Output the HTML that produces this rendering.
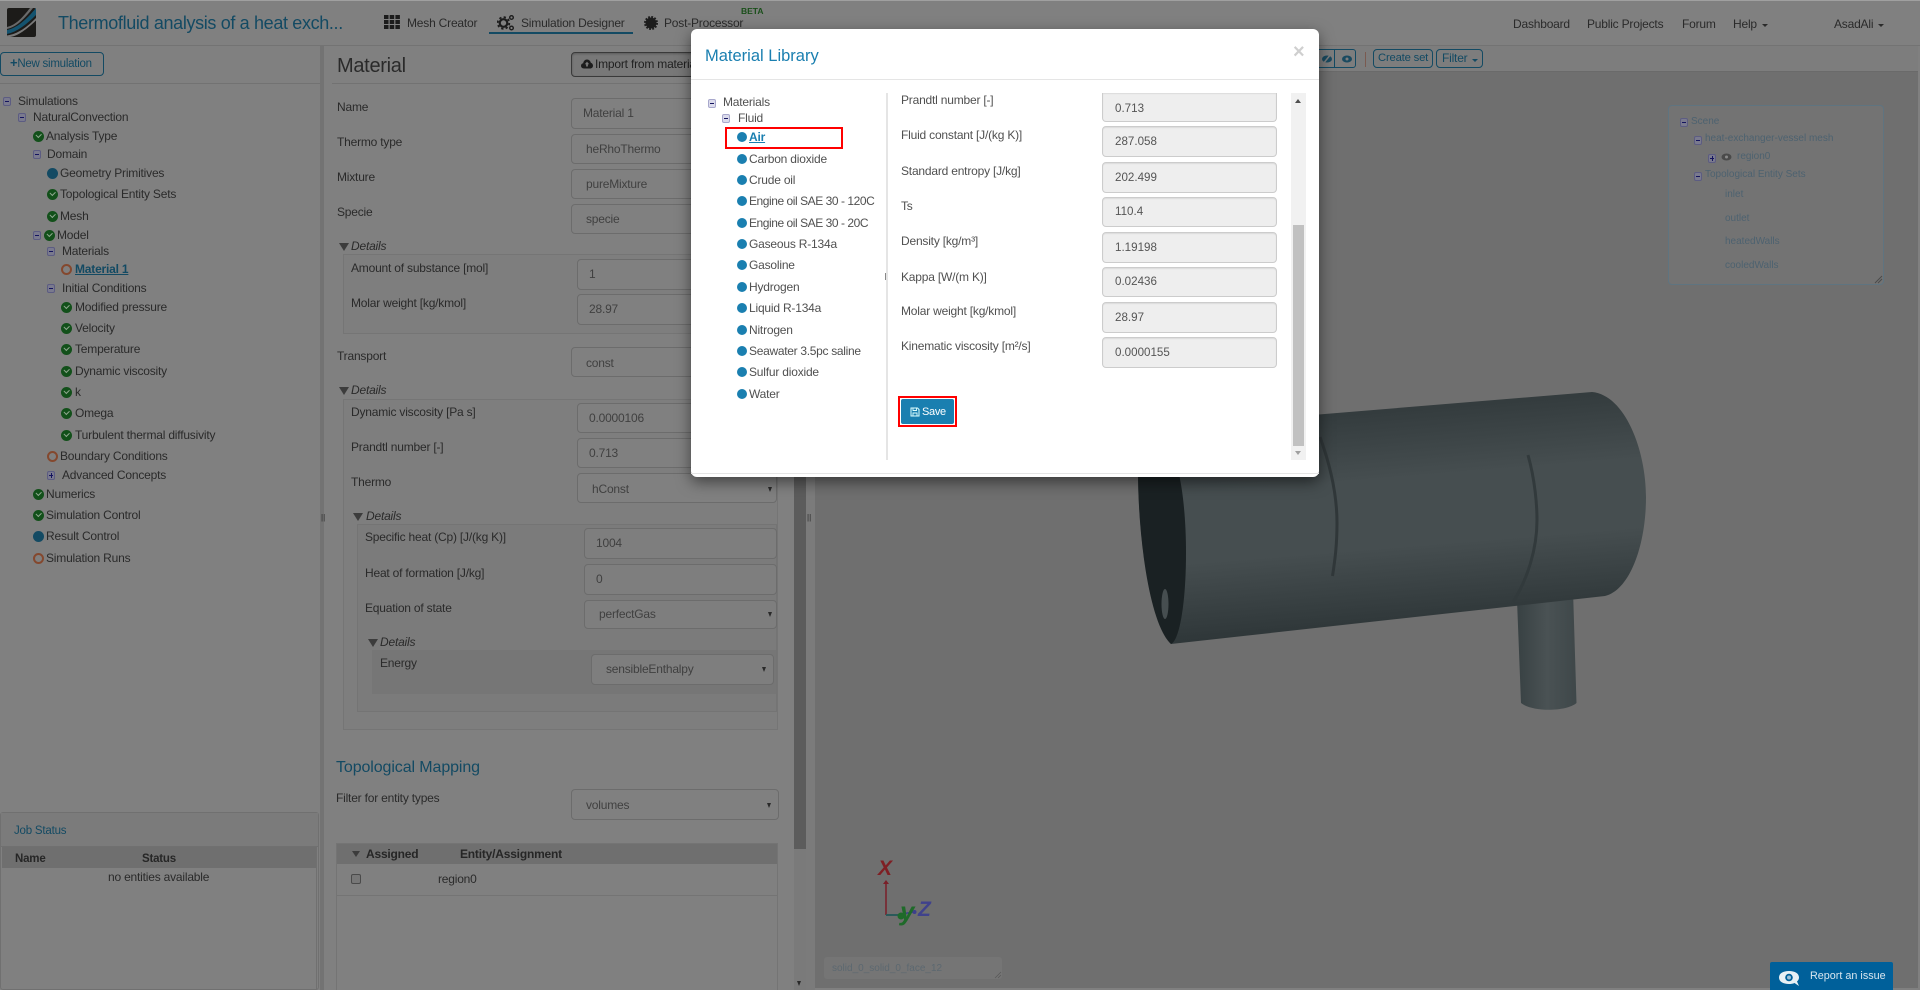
<!DOCTYPE html>
<html lang="en">
<head>
<meta charset="utf-8">
<title>Material Library</title>
<style>
html,body{margin:0;padding:0;width:1920px;height:990px;overflow:hidden;background:#808080}
body{position:relative;font-family:"Liberation Sans",Arial,sans-serif;font-size:12px;letter-spacing:-.2px;color:#2a2a2a}
.a,.t,.i,.ck,.dot,.ring,.mn,.pl,svg.p{position:absolute}
.t{white-space:nowrap;line-height:16px;margin-top:-8px}
.i{box-sizing:border-box;border:1px solid #6c6c6c;border-radius:4px;background:#808080;color:#404040;white-space:nowrap;overflow:hidden}
.ck{width:11px;height:11px;border-radius:50%;background:#12501a;margin-top:-5px}
.ck:after{content:"";position:absolute;left:3px;top:2px;width:4px;height:2.5px;border-left:1.6px solid #8fa88f;border-bottom:1.6px solid #8fa88f;transform:rotate(-45deg)}
.dot{width:11px;height:11px;border-radius:50%;background:#134a63;margin-top:-5px}
.ring{box-sizing:border-box;width:11px;height:11px;border-radius:50%;border:2px solid #84482e;margin-top:-5px}
.mn,.pl{box-sizing:border-box;width:8px;height:9px;border:1px solid #5c5c82;border-radius:2px;background:#7a7a8e;margin-top:-4px}
.mn:after,.pl:after{content:"";position:absolute;left:1px;top:3px;width:4px;height:1px;background:#14145e}
.pl:before{content:"";position:absolute;left:2.5px;top:1px;width:1px;height:5px;background:#14145e}
.tri{position:absolute;width:0;height:0;border-left:5px solid transparent;border-right:5px solid transparent;border-top:8px solid #3c3c3c;margin-top:-4px}
.ar{position:absolute;width:0;height:0;border-left:2.5px solid transparent;border-right:2.5px solid transparent;border-top:5px solid #2a2a2a}
.sc{color:#4d6270;font-size:10px;letter-spacing:0}
.mt{color:#505050}
.ml{color:#505050}
.mi{position:absolute;box-sizing:border-box;left:1102px;width:175px;border:1px solid #ccc;border-radius:4px;background:#eee;color:#555;font-size:11.6px;letter-spacing:0;padding-left:12px;box-shadow:inset 0 1px 1px rgba(0,0,0,.08)}
.mdot{position:absolute;left:737px;width:10px;height:10px;border-radius:50%;background:#1a7fb0;margin-top:-5px}
</style>
</head>
<body>

<!-- top bar -->
<div class="a" style="left:0;top:0;width:1920px;height:1px;background:#a0a0a0"></div>
<div class="a" style="left:0;top:45px;width:1920px;height:1px;background:#737373"></div>
<svg class="p" style="left:7px;top:8px" width="29" height="29" viewBox="0 0 29 29">
<rect width="29" height="29" rx="2" fill="#1c1b19"/>
<path d="M0 22C10 20 19 12 29 0V7C20 16 10 24 0 26Z" fill="#14536f"/>
<path d="M0 19C9 17 16 9 23 0H26C18 10 10 19 0 21Z" fill="#6a6a6a"/>
<path d="M0 27.500C11 26 20 19 29 10V12.500C20 21 11 28 3 29H0Z" fill="#7a7a7a"/>
</svg>
<div class="t" style="left:58px;top:23px;font-size:18px;letter-spacing:-.35px;color:#134a63;line-height:22px;margin-top:-11px">Thermofluid analysis of a heat exch...</div>
<svg class="p" style="left:384px;top:15px" width="16" height="14" viewBox="0 0 16 14" fill="#1c1c1c">
<rect x="0" y="0" width="4.500" height="4"/><rect x="5.700" y="0" width="4.500" height="4"/><rect x="11.400" y="0" width="4.500" height="4"/>
<rect x="0" y="5" width="4.500" height="4"/><rect x="5.700" y="5" width="4.500" height="4"/><rect x="11.400" y="5" width="4.500" height="4"/>
<rect x="0" y="10" width="4.500" height="4"/><rect x="5.700" y="10" width="4.500" height="4"/><rect x="11.400" y="10" width="4.500" height="4"/>
</svg>
<div class="t" style="left:407px;top:23px">Mesh Creator</div>
<svg class="p" style="left:497px;top:14px" width="18" height="17" viewBox="0 0 18 17">
<circle cx="6.500" cy="9" r="3.800" fill="none" stroke="#1c1c1c" stroke-width="2.200"/>
<circle cx="6.500" cy="9" r="5.800" fill="none" stroke="#1c1c1c" stroke-width="1.800" stroke-dasharray="2.300 2.250"/>
<circle cx="14.500" cy="3.500" r="1.800" fill="none" stroke="#1c1c1c" stroke-width="1.400"/>
<circle cx="14.500" cy="14" r="1.800" fill="none" stroke="#1c1c1c" stroke-width="1.400"/>
</svg>
<div class="t" style="left:521px;top:23px">Simulation Designer</div>
<div class="a" style="left:489px;top:32px;width:144px;height:2px;background:#134a63"></div>
<svg class="p" style="left:644px;top:16px" width="14" height="14" viewBox="0 0 14 14">
<circle cx="7" cy="7" r="5.500" fill="#1c1c1c"/>
<circle cx="7" cy="7" r="6" fill="none" stroke="#1c1c1c" stroke-width="2" stroke-dasharray="1.800 1.350"/>
</svg>
<div class="t" style="left:664px;top:23px">Post-Processor</div>
<div class="t" style="left:741px;top:11px;font-size:8.500px;font-weight:bold;color:#1a4f1a;letter-spacing:0">BETA</div>

<div class="t" style="left:1513px;top:24px">Dashboard</div>
<div class="t" style="left:1587px;top:24px">Public Projects</div>
<div class="t" style="left:1682px;top:24px">Forum</div>
<div class="t" style="left:1733px;top:24px">Help</div>
<div class="ar" style="left:1762px;top:24px;border-left-width:3px;border-right-width:3px;border-top-width:3px"></div>
<div class="t" style="left:1834px;top:24px">AsadAli</div>
<div class="ar" style="left:1878px;top:24px;border-left-width:3px;border-right-width:3px;border-top-width:3px"></div>

<!-- left panel -->
<div class="i" style="left:0;top:52px;width:104px;height:24px;border-color:#134a63;line-height:22px;color:#134a63;padding-left:9px;background:transparent;font-size:11.500px;letter-spacing:-.25px"><b style="font-size:13px;line-height:13px">+</b>New simulation</div>
<div class="a" style="left:0;top:83px;width:320px;height:1px;background:#727272"></div>
<div class="a" style="left:320px;top:46px;width:4px;height:944px;background:#737373"></div>
<div class="t" style="left:321px;top:518px;font-size:8px;letter-spacing:0">||</div>

<div class="mn" style="left:3px;top:101px"></div><div class="t" style="left:18px;top:101px">Simulations</div>
<div class="mn" style="left:18px;top:117px"></div><div class="t" style="left:33px;top:117px">NaturalConvection</div>
<div class="ck" style="left:33px;top:136px"></div><div class="t" style="left:46px;top:136px">Analysis Type</div>
<div class="mn" style="left:33px;top:154px"></div><div class="t" style="left:47px;top:154px">Domain</div>
<div class="dot" style="left:47px;top:173px"></div><div class="t" style="left:60px;top:173px">Geometry Primitives</div>
<div class="ck" style="left:47px;top:194px"></div><div class="t" style="left:60px;top:194px">Topological Entity Sets</div>
<div class="ck" style="left:47px;top:216px"></div><div class="t" style="left:60px;top:216px">Mesh</div>
<div class="mn" style="left:33px;top:235px"></div><div class="ck" style="left:44px;top:235px"></div><div class="t" style="left:57px;top:235px">Model</div>
<div class="mn" style="left:47px;top:251px"></div><div class="t" style="left:62px;top:251px">Materials</div>
<div class="ring" style="left:61px;top:269px"></div><div class="t" style="left:75px;top:269px;color:#134a63;font-weight:bold;text-decoration:underline">Material 1</div>
<div class="mn" style="left:47px;top:288px"></div><div class="t" style="left:62px;top:288px">Initial Conditions</div>
<div class="ck" style="left:61px;top:307px"></div><div class="t" style="left:75px;top:307px">Modified pressure</div>
<div class="ck" style="left:61px;top:328px"></div><div class="t" style="left:75px;top:328px">Velocity</div>
<div class="ck" style="left:61px;top:349px"></div><div class="t" style="left:75px;top:349px">Temperature</div>
<div class="ck" style="left:61px;top:371px"></div><div class="t" style="left:75px;top:371px">Dynamic viscosity</div>
<div class="ck" style="left:61px;top:392px"></div><div class="t" style="left:75px;top:392px">k</div>
<div class="ck" style="left:61px;top:413px"></div><div class="t" style="left:75px;top:413px">Omega</div>
<div class="ck" style="left:61px;top:435px"></div><div class="t" style="left:75px;top:435px">Turbulent thermal diffusivity</div>
<div class="ring" style="left:47px;top:456px"></div><div class="t" style="left:60px;top:456px">Boundary Conditions</div>
<div class="pl" style="left:47px;top:475px"></div><div class="t" style="left:62px;top:475px">Advanced Concepts</div>
<div class="ck" style="left:33px;top:494px"></div><div class="t" style="left:46px;top:494px">Numerics</div>
<div class="ck" style="left:33px;top:515px"></div><div class="t" style="left:46px;top:515px">Simulation Control</div>
<div class="dot" style="left:33px;top:536px"></div><div class="t" style="left:46px;top:536px">Result Control</div>
<div class="ring" style="left:33px;top:558px"></div><div class="t" style="left:46px;top:558px">Simulation Runs</div>

<!-- job status -->
<div class="a" style="left:0;top:812px;width:319px;height:178px;box-sizing:border-box;border:1px solid #707070;border-radius:3px;background:#808080"></div>
<div class="a" style="left:1px;top:813px;width:317px;height:33px;background:#7b7b7b;border-bottom:1px solid #707070"></div>
<div class="t" style="left:14px;top:831px;color:#134a63;font-size:11.500px">Job Status</div>
<div class="a" style="left:2px;top:847px;width:314px;height:21px;background:#6f6f6f"></div>
<div class="a" style="left:316px;top:847px;width:1px;height:143px;background:#707070"></div>
<div class="t" style="left:15px;top:859px;font-weight:bold;color:#262626;font-size:11.500px">Name</div>
<div class="t" style="left:142px;top:859px;font-weight:bold;color:#262626;font-size:11.500px">Status</div>
<div class="t" style="left:108px;top:877px">no entities available</div>

<!-- middle panel -->
<div class="a" style="left:332px;top:83px;width:462px;height:1px;background:#727272"></div>
<div class="t" style="left:337px;top:66px;font-size:20px;letter-spacing:-.3px;line-height:24px;margin-top:-12px">Material</div>
<div class="i" style="left:571px;top:52px;width:200px;height:25px;border:1px solid #3a3a3a;background:#787878;line-height:23px;padding-left:23px;color:#202020;box-shadow:inset 0 1px 2px rgba(0,0,0,.25)">Import from material library</div>
<svg class="p" style="left:581px;top:59px" width="12" height="10" viewBox="0 0 12 10"><path d="M3 9.500C1 9.500 0 8.200 0 6.800C0 5.400 1 4.500 2.200 4.300C2.400 2.200 4 .5 6 .5C8 .5 9.500 2 9.800 3.800C11 4.100 12 5.200 12 6.600C12 8.300 10.800 9.500 9 9.500Z" fill="#1c1c1c"/><path d="M6 2.800L8.200 5.200H6.900V7.500H5.100V5.200H3.800Z" fill="#787878"/></svg>

<div class="t" style="left:337px;top:107px">Name</div><div class="i" style="left:571px;top:98px;width:209px;height:31px;line-height:29px;padding-left:11px">Material 1</div>
<div class="t" style="left:337px;top:142px">Thermo type</div><div class="i" style="left:571px;top:134px;width:209px;height:30px;line-height:28px;padding-left:14px">heRhoThermo</div>
<div class="t" style="left:337px;top:177px">Mixture</div><div class="i" style="left:571px;top:169px;width:209px;height:30px;line-height:28px;padding-left:14px">pureMixture</div>
<div class="t" style="left:337px;top:212px">Specie</div><div class="i" style="left:571px;top:204px;width:209px;height:30px;line-height:28px;padding-left:14px">specie</div>

<div class="tri" style="left:339px;top:247px"></div><div class="t" style="left:351px;top:246px;font-style:italic">Details</div>
<div class="a" style="left:343px;top:254px;width:437px;height:80px;box-sizing:border-box;border:1px solid #757575;background:#7e7e7e"></div>
<div class="t" style="left:351px;top:268px">Amount of substance [mol]</div><div class="i" style="left:577px;top:259px;width:200px;height:31px;line-height:29px;padding-left:11px">1</div>
<div class="t" style="left:351px;top:303px">Molar weight [kg/kmol]</div><div class="i" style="left:577px;top:294px;width:200px;height:31px;line-height:29px;padding-left:11px">28.97</div>

<div class="t" style="left:337px;top:356px">Transport</div><div class="i" style="left:571px;top:347px;width:209px;height:30px;line-height:30px;padding-left:14px">const</div>
<div class="tri" style="left:339px;top:391px"></div><div class="t" style="left:351px;top:390px;font-style:italic">Details</div>
<div class="a" style="left:343px;top:399px;width:435px;height:331px;box-sizing:border-box;border:1px solid #757575;background:#7e7e7e"></div>
<div class="t" style="left:351px;top:412px">Dynamic viscosity [Pa s]</div><div class="i" style="left:577px;top:403px;width:200px;height:30px;line-height:28px;padding-left:11px">0.0000106</div>
<div class="t" style="left:351px;top:447px">Prandtl number [-]</div><div class="i" style="left:577px;top:438px;width:200px;height:30px;line-height:28px;padding-left:11px">0.713</div>
<div class="t" style="left:351px;top:482px">Thermo</div><div class="i" style="left:577px;top:473px;width:200px;height:30px;line-height:30px;padding-left:14px">hConst</div>
<div class="ar" style="left:768px;top:487px"></div>

<div class="tri" style="left:353px;top:517px"></div><div class="t" style="left:366px;top:516px;font-style:italic">Details</div>
<div class="a" style="left:357px;top:524px;width:420px;height:188px;box-sizing:border-box;border:1px solid #747474;background:#7b7b7b"></div>
<div class="t" style="left:365px;top:537px">Specific heat (Cp) [J/(kg K)]</div><div class="i" style="left:584px;top:528px;width:193px;height:31px;line-height:29px;padding-left:11px;background:#7e7e7e">1004</div>
<div class="t" style="left:365px;top:573px">Heat of formation [J/kg]</div><div class="i" style="left:584px;top:564px;width:193px;height:31px;line-height:29px;padding-left:11px;background:#7e7e7e">0</div>
<div class="t" style="left:365px;top:608px">Equation of state</div><div class="i" style="left:584px;top:600px;width:193px;height:29px;line-height:27px;padding-left:14px;background:#7e7e7e">perfectGas</div>
<div class="ar" style="left:768px;top:612px"></div>

<div class="tri" style="left:368px;top:643px"></div><div class="t" style="left:380px;top:642px;font-style:italic">Details</div>
<div class="a" style="left:372px;top:650px;width:404px;height:44px;background:#767676"></div>
<div class="t" style="left:380px;top:663px">Energy</div><div class="i" style="left:591px;top:654px;width:183px;height:31px;line-height:29px;padding-left:14px;background:#7e7e7e">sensibleEnthalpy</div>
<div class="ar" style="left:762px;top:667px"></div>

<div class="t" style="left:336px;top:768px;font-size:16px;letter-spacing:-.1px;color:#134a63;line-height:20px;margin-top:-10px">Topological Mapping</div>
<div class="t" style="left:336px;top:798px">Filter for entity types</div>
<div class="i" style="left:571px;top:789px;width:208px;height:31px;line-height:31px;padding-left:14px">volumes</div>
<div class="ar" style="left:767px;top:803px"></div>

<div class="a" style="left:336px;top:843px;width:442px;height:147px;box-sizing:border-box;border:1px solid #747474;border-bottom:0"></div>
<div class="a" style="left:337px;top:844px;width:440px;height:20px;background:#6f6f6f"></div>
<div class="a" style="left:352px;top:851px;width:0;height:0;border-left:4px solid transparent;border-right:4px solid transparent;border-top:6px solid #3c3c3c"></div>
<div class="t" style="left:366px;top:854px;font-weight:bold;color:#262626">Assigned</div>
<div class="t" style="left:460px;top:854px;font-weight:bold;color:#262626">Entity/Assignment</div>
<div class="a" style="left:351px;top:874px;width:10px;height:10px;box-sizing:border-box;border:1px solid #4a4a4a;border-radius:2px;background:#777"></div>
<div class="t" style="left:438px;top:879px">region0</div>
<div class="a" style="left:337px;top:895px;width:440px;height:1px;background:#747474"></div>

<div class="a" style="left:794px;top:46px;width:12px;height:944px;background:#7a7a7a"></div>
<div class="a" style="left:794px;top:46px;width:12px;height:803px;background:#5c5c5c"></div>
<div class="ar" style="left:797px;top:981px"></div>
<div class="a" style="left:806px;top:46px;width:9px;height:944px;background:#7b7b7b"></div>
<div class="t" style="left:807px;top:518px;font-size:8px;letter-spacing:0">||</div>

<!-- viewer -->
<div class="a" style="left:815px;top:46px;width:1103px;height:26px;background:#7d7d7d;border-bottom:1px solid #6a6a6a;box-sizing:border-box"></div>
<div class="a" style="left:815px;top:72px;width:1103px;height:916px;background:#6f6f6f"></div>
<div class="a" style="left:1300px;top:49px;width:56px;height:19px;box-sizing:border-box;border:1px solid #134a63;border-radius:3px"></div>
<div class="a" style="left:1334px;top:49px;width:1px;height:19px;background:#134a63"></div>
<svg class="p" style="left:1320px;top:53px" width="34" height="12" viewBox="0 0 34 12">
<ellipse cx="7" cy="6" rx="5" ry="3.500" fill="#1a4a60"/><path d="M3 11L11 1" stroke="#7d7d7d" stroke-width="1.500"/>
<ellipse cx="27" cy="6" rx="5" ry="3.500" fill="#1a4a60"/><circle cx="27" cy="6" r="1.500" fill="#7d7d7d"/>
</svg>
<div class="a" style="left:1365px;top:52px;width:1px;height:15px;background:#7a5a50"></div>
<div class="i" style="left:1373px;top:49px;width:60px;height:19px;border-color:#134a63;background:transparent;color:#134a63;line-height:17px;padding-left:4px;font-size:11.300px">Create set</div>
<div class="i" style="left:1436px;top:49px;width:47px;height:19px;border-color:#134a63;background:transparent;color:#134a63;line-height:17px;padding-left:5px">Filter</div>
<div class="ar" style="left:1472px;top:59px;border-top-color:#134a63;border-left-width:3px;border-right-width:3px;border-top-width:3px"></div>

<!-- 3D model -->
<svg class="p" style="left:0;top:0" width="1920" height="990" viewBox="0 0 1920 990">
<defs>
<linearGradient id="b" gradientUnits="userSpaceOnUse" x1="1390" y1="392" x2="1410" y2="640">
<stop offset="0" stop-color="#2f3739"/><stop offset=".35" stop-color="#464e50"/><stop offset=".62" stop-color="#464e50"/><stop offset="1" stop-color="#2a3234"/>
</linearGradient>
<linearGradient id="c" gradientUnits="userSpaceOnUse" x1="1517" y1="0" x2="1577" y2="0">
<stop offset="0" stop-color="#384143"/><stop offset=".5" stop-color="#4a5254"/><stop offset="1" stop-color="#3e4749"/>
</linearGradient>
</defs>
<path d="M1517 600L1521 703C1532 712 1566 712 1576.500 703L1573 590Z" fill="url(#c)"/>
<path d="M1130 430L1592 392C1625 395 1646 450 1646 497C1646 545 1630 590 1605 596L1171 644C1150 620 1138 540 1138 470Z" fill="url(#b)"/>
<path d="M1138 470C1138 540 1150 625 1171 644C1180 640 1186 600 1186 553C1186 520 1183 490 1178 470Z" fill="#1a2123"/>
<ellipse cx="1165" cy="604" rx="3.500" ry="15" fill="#464e50"/>
<path d="M1320 437C1332 470 1337 500 1337 523C1337 545 1335 560 1332.500 576" fill="none" stroke="#303739" stroke-width="3"/>
<path d="M1528 455C1535 480 1537 505 1537 520C1537 550 1527 580 1513 602" fill="none" stroke="#323a3c" stroke-width="3"/>
<path d="M886 915V884" stroke="#7a1f28" stroke-width="1.500"/>
<path d="M883 884L886 880L889 884Z" fill="#7a1f28"/>
<path d="M886 915H901" stroke="#2a5a5a" stroke-width="2"/>
<path d="M901 914L914 912" stroke="#3d3f8c" stroke-width="1.500"/>
<circle cx="914.500" cy="912" r="2" fill="#3d3f8c"/>
<circle cx="901" cy="916" r="3.500" fill="#1f6a2a"/>
<text x="878" y="875" font-family="Liberation Sans" font-size="21" font-weight="bold" font-style="italic" fill="#7f1f24" letter-spacing="0">X</text>
<text x="900" y="920" font-family="Liberation Sans" font-size="26" font-weight="bold" font-style="italic" fill="#1f6a2a" letter-spacing="0">y</text>
<text x="918" y="916" font-family="Liberation Sans" font-size="21" font-weight="bold" font-style="italic" fill="#40428c" letter-spacing="0">Z</text>
</svg>

<div class="a" style="left:824px;top:957px;width:178px;height:22px;background:#757575;border-radius:3px"></div>
<div class="t sc" style="left:832px;top:969px;font-size:10px;color:#5c6870">solid_0_solid_0_face_12</div>
<svg class="p" style="left:994px;top:971px" width="8" height="8" viewBox="0 0 8 8"><path d="M1 7L7 1M4 7L7 4" stroke="#5a5a5a" stroke-width=".8"/></svg>

<!-- scene tree -->
<div class="a" style="left:1668px;top:105px;width:216px;height:180px;box-sizing:border-box;border:1px solid #5f7480;border-radius:4px;background:#737373"></div>
<div class="mn" style="left:1680px;top:122px"></div><div class="t sc" style="left:1691px;top:122px">Scene</div>
<div class="mn" style="left:1694px;top:140px"></div><div class="t sc" style="left:1705px;top:139px">heat-exchanger-vessel mesh</div>
<div class="pl" style="left:1708px;top:158px"></div>
<svg class="p" style="left:1721px;top:153px" width="11" height="8" viewBox="0 0 11 8"><ellipse cx="5.500" cy="4" rx="5" ry="3.500" fill="#4a4a4a"/><circle cx="5.500" cy="4" r="1.500" fill="#8a8a8a"/></svg>
<div class="t sc" style="left:1737px;top:157px">region0</div>
<div class="mn" style="left:1694px;top:176px"></div><div class="t sc" style="left:1705px;top:175px">Topological Entity Sets</div>
<div class="t sc" style="left:1725px;top:195px">inlet</div>
<div class="t sc" style="left:1725px;top:219px">outlet</div>
<div class="t sc" style="left:1725px;top:242px">heatedWalls</div>
<div class="t sc" style="left:1725px;top:266px">cooledWalls</div>
<svg class="p" style="left:1874px;top:275px" width="9" height="9" viewBox="0 0 9 9"><path d="M1 8L8 1M4 8L8 4" stroke="#4a4a4a" stroke-width=".9"/></svg>

<!-- report -->
<div class="a" style="left:1770px;top:962px;width:123px;height:28px;background:#00609a;border-radius:2px 2px 0 0"></div>
<svg class="p" style="left:1779px;top:970px" width="21" height="17" viewBox="0 0 21 17">
<path d="M10 1C4 1 0 3.500 0 7.500S4 14 10 14C12 14 14 13.700 15.500 13L20 16L18 11.500C19.200 10.500 20 9 20 7.500C20 3.500 16 1 10 1Z" fill="#e8f0f5"/>
<circle cx="10" cy="7.500" r="3.800" fill="#00609a"/><circle cx="10" cy="7.500" r="2" fill="#9cc0d8"/>
</svg>
<div class="t" style="left:1810px;top:976px;color:#d8e6ef;font-size:10.800px;letter-spacing:0">Report an issue</div>

<!-- modal -->
<div class="a" style="left:691px;top:29px;width:628px;height:448px;background:#fff;border-radius:6px;box-shadow:0 5px 15px rgba(0,0,0,.5)"></div>
<div class="t" style="left:705px;top:56px;font-size:16.500px;letter-spacing:0;color:#1a7fb0;line-height:20px;margin-top:-10px">Material Library</div>
<div class="t" style="left:1293px;top:52px;font-size:20px;font-weight:bold;letter-spacing:0;color:#cfcfcf;line-height:20px;margin-top:-10px">×</div>
<div class="a" style="left:691px;top:79px;width:628px;height:1px;background:#e5e5e5"></div>

<div class="mn" style="left:708px;top:103px;background:#dcdcec;border-color:#a8a8cc"></div><div class="t mt" style="left:723px;top:102px">Materials</div>
<div class="mn" style="left:722px;top:118px;background:#dcdcec;border-color:#a8a8cc"></div><div class="t mt" style="left:738px;top:118px">Fluid</div>
<div class="a" style="left:725px;top:127px;width:118px;height:22px;box-sizing:border-box;border:2px solid #f00"></div>
<div class="mdot" style="top:137px"></div><div class="t" style="left:749px;top:137px;color:#1a7fb0;font-weight:bold;text-decoration:underline">Air</div>
<div class="mdot" style="top:159px"></div><div class="t mt" style="left:749px;top:159px">Carbon dioxide</div>
<div class="mdot" style="top:180px"></div><div class="t mt" style="left:749px;top:180px">Crude oil</div>
<div class="mdot" style="top:201px"></div><div class="t mt" style="left:749px;top:201px;letter-spacing:-.45px">Engine oil SAE 30 - 120C</div>
<div class="mdot" style="top:223px"></div><div class="t mt" style="left:749px;top:223px;letter-spacing:-.45px">Engine oil SAE 30 - 20C</div>
<div class="mdot" style="top:244px"></div><div class="t mt" style="left:749px;top:244px">Gaseous R-134a</div>
<div class="mdot" style="top:265px"></div><div class="t mt" style="left:749px;top:265px">Gasoline</div>
<div class="mdot" style="top:287px"></div><div class="t mt" style="left:749px;top:287px">Hydrogen</div>
<div class="mdot" style="top:308px"></div><div class="t mt" style="left:749px;top:308px">Liquid R-134a</div>
<div class="mdot" style="top:330px"></div><div class="t mt" style="left:749px;top:330px">Nitrogen</div>
<div class="mdot" style="top:351px"></div><div class="t mt" style="left:749px;top:351px;letter-spacing:-.3px">Seawater 3.5pc saline</div>
<div class="mdot" style="top:372px"></div><div class="t mt" style="left:749px;top:372px">Sulfur dioxide</div>
<div class="mdot" style="top:394px"></div><div class="t mt" style="left:749px;top:394px">Water</div>
<div class="a" style="left:886px;top:93px;width:2px;height:367px;background:#e5e5e5"></div>
<div class="a" style="left:885px;top:273px;width:1px;height:7px;background:#888"></div>

<div class="t ml" style="left:901px;top:100px">Prandtl number [-]</div>
<div class="mi" style="top:93px;height:29px;line-height:27px;border-top:0;padding-top:2px;border-radius:0 0 4px 4px">0.713</div>
<div class="t ml" style="left:901px;top:135px">Fluid constant [J/(kg K)]</div><div class="mi" style="top:126px;height:31px;line-height:29px">287.058</div>
<div class="t ml" style="left:901px;top:171px">Standard entropy [J/kg]</div><div class="mi" style="top:162px;height:31px;line-height:29px">202.499</div>
<div class="t ml" style="left:901px;top:206px">Ts</div><div class="mi" style="top:197px;height:30px;line-height:28px">110.4</div>
<div class="t ml" style="left:901px;top:241px">Density [kg/m³]</div><div class="mi" style="top:232px;height:31px;line-height:29px">1.19198</div>
<div class="t ml" style="left:901px;top:277px">Kappa [W/(m K)]</div><div class="mi" style="top:267px;height:30px;line-height:28px">0.02436</div>
<div class="t ml" style="left:901px;top:311px">Molar weight [kg/kmol]</div><div class="mi" style="top:302px;height:31px;line-height:29px">28.97</div>
<div class="t ml" style="left:901px;top:346px">Kinematic viscosity [m²/s]</div><div class="mi" style="top:337px;height:31px;line-height:29px">0.0000155</div>

<div class="a" style="left:898px;top:396px;width:59px;height:31px;box-sizing:border-box;border:2px solid #f00"></div>
<div class="a" style="left:901px;top:399px;width:53px;height:25px;background:#1a7fb0;border-radius:2px"></div>
<svg class="p" style="left:910px;top:407px" width="10" height="10" viewBox="0 0 10 10"><path d="M1 1H7.500L9 2.500V9H1Z" fill="none" stroke="#dff" stroke-width="1"/><path d="M3 1V3.500H6.500V1M3 9V6H7V9" fill="none" stroke="#dff" stroke-width=".9"/></svg>
<div class="t" style="left:922px;top:412px;color:#fff;font-size:11px;letter-spacing:-.3px">Save</div>

<div class="a" style="left:1291px;top:93px;width:15px;height:367px;background:#f1f1f1"></div>
<div class="a" style="left:1293px;top:225px;width:11px;height:221px;background:#c1c1c1"></div>
<div class="a" style="left:1295px;top:99px;width:0;height:0;border-left:3.500px solid transparent;border-right:3.500px solid transparent;border-bottom:4px solid #505050"></div>
<div class="a" style="left:1295px;top:451px;width:0;height:0;border-left:3.500px solid transparent;border-right:3.500px solid transparent;border-top:4px solid #a0a0a0"></div>
<div class="a" style="left:691px;top:473px;width:628px;height:1px;background:#e5e5e5"></div>

</body>
</html>
